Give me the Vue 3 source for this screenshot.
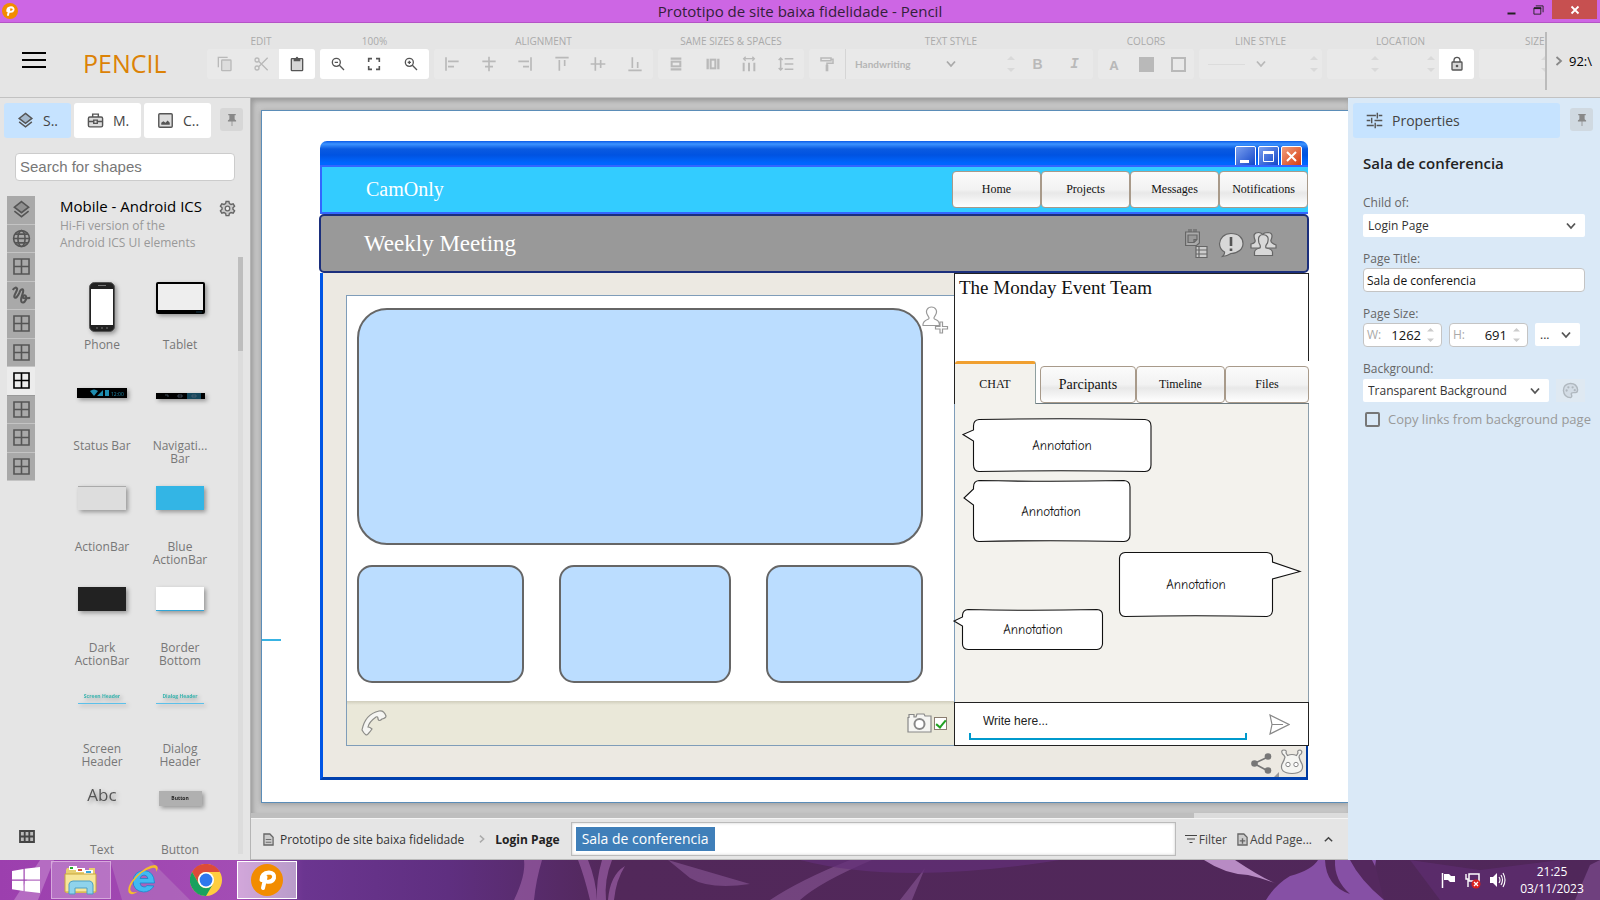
<script setup>
import { ref } from 'vue'

const alignIcons = [
  ['Align left', 'a-left'], ['Align center', 'a-center'], ['Align right', 'a-right'],
  ['Align top', 'a-top'], ['Align middle', 'a-middle'], ['Align bottom', 'a-bottom'],
]
const sizeIcons = [['Same width', 's-width'], ['Same height', 's-height'], ['Space evenly', 's-hspace'], ['Line spacing', 's-vspace']]
const collections = ['layers', 'globe', 'grid', 'squiggle', 'grid', 'grid', 'grid', 'grid', 'grid', 'grid']
const activeCollection = ref(6)
const shapes = [
  { name: ['Phone'], kind: 'phone' }, { name: ['Tablet'], kind: 'tablet' },
  { name: ['Status Bar'], kind: 'status' }, { name: ['Navigati...', 'Bar'], kind: 'nav' },
  { name: ['ActionBar'], kind: 'action' }, { name: ['Blue', 'ActionBar'], kind: 'blue' },
  { name: ['Dark', 'ActionBar'], kind: 'dark' }, { name: ['Border', 'Bottom'], kind: 'border' },
  { name: ['Screen', 'Header'], kind: 'screen' }, { name: ['Dialog', 'Header'], kind: 'dialog' },
  { name: ['Text'], kind: 'text' }, { name: ['Button'], kind: 'button' },
]
const bubbles = [
  { x: 1062, y: 450, d: 'M979 419.5Q1060 418 1145 419.5Q1151 420 1151 426V465Q1151 471 1145 471.5Q1060 470 979 471.5Q973.500 471 973.500 465V441L963 434.500L973.500 430V426Q973.500 420 979 419.500Z' },
  { x: 1051, y: 516, d: 'M979 480.5Q1050 482 1124 480.5Q1130 481 1130 487V535Q1130 541 1124 541.5Q1050 540 979 541.5Q973.500 541 973.500 535V505L964 498L973.500 489V487Q973.500 481 979 480.500Z' },
  { x: 1196, y: 589, d: 'M1125 552.500H1267Q1272.500 553 1272.500 558V562L1300 571.500L1272.500 579V611Q1272 616 1267 616.500Q1195 615 1125 616.500Q1119.500 616 1119.500 610V558Q1120 553 1125 552.500Z' },
  { x: 1033, y: 634, d: 'M968 609.500Q1030 611 1097 609.500Q1102.500 610 1102.500 615V644Q1102 649 1097 649.500H968Q962.500 649 962.500 644V626L954 621L962.500 617V615Q963 610 968 609.500Z' },
]
const search = ref('')
const pageTitle = ref('Sala de conferencia')
const pageW = ref('1262')
const pageH = ref('691')
const message = ref('Write here...')
const camera = ref(true)
</script>

<template>
  <div class="app">
    <svg class="sprite" aria-hidden="true">
      <symbol id="pencil-logo" viewBox="0 0 32 32"><circle cx="16" cy="16" r="16" fill="#f28c00" /><path d="M12 24L14.500 13Q11.500 14 10.500 16Q10.500 9 18 8.500Q24 9 23 14Q21.500 18.500 15.500 17.500" fill="none" stroke="#fff" stroke-width="4" stroke-linecap="round" stroke-linejoin="round" /></symbol>
      <symbol id="copy" viewBox="0 0 24 24"><path d="M2 17V2H16" fill="none" stroke="currentColor" stroke-width="2" /><rect x="7" y="6" width="14" height="16" rx="1" fill="#ddd" stroke="currentColor" stroke-width="2" /></symbol>
      <symbol id="cut" viewBox="0 0 24 24"><g fill="none" stroke="currentColor" stroke-width="2"><circle cx="6" cy="6" r="3" /><circle cx="6" cy="18" r="3" /><path d="M8.500 8L22 21.500M8.500 16L22 2.500" /></g></symbol>
      <symbol id="paste" viewBox="0 0 24 24"><rect x="3.500" y="4" width="17" height="18" rx="1" fill="#d6d6d6" stroke="currentColor" stroke-width="2" /><path d="M7 3H10Q12 -1 14 3H17V8H7Z" fill="currentColor" /></symbol>
      <symbol id="zoom-out" viewBox="0 0 24 24"><g fill="none" stroke="currentColor" stroke-width="2"><circle cx="9.500" cy="9.500" r="6" /><path d="M14 14L21 21M7 9.500H12" /></g></symbol>
      <symbol id="zoom-in" viewBox="0 0 24 24"><g fill="none" stroke="currentColor" stroke-width="2"><circle cx="9.500" cy="9.500" r="6" /><path d="M14 14L21 21M7 9.500H12M9.500 7V12" /></g></symbol>
      <symbol id="fit" viewBox="0 0 24 24"><path d="M4 9V4H9M15 4H20V9M20 15V20H15M9 20H4V15" fill="none" stroke="currentColor" stroke-width="2.400" /></symbol>
      <symbol id="a-left" viewBox="0 0 24 24"><path d="M3 2V22M6 8H22M6 16H15" stroke="currentColor" stroke-width="2.500" /></symbol>
      <symbol id="a-center" viewBox="0 0 24 24"><path d="M12 1V23M2 8H22M6 16H18" stroke="currentColor" stroke-width="2.500" /></symbol>
      <symbol id="a-right" viewBox="0 0 24 24"><path d="M21 2V22M2 8H18M9 16H18" stroke="currentColor" stroke-width="2.500" /></symbol>
      <symbol id="a-top" viewBox="0 0 24 24"><path d="M2 2.500H22M8 6V22M16 6V15" stroke="currentColor" stroke-width="2.500" /></symbol>
      <symbol id="a-middle" viewBox="0 0 24 24"><path d="M1 12H23M8 2V22M16 6V18" stroke="currentColor" stroke-width="2.500" /></symbol>
      <symbol id="a-bottom" viewBox="0 0 24 24"><path d="M2 21.500H22M8 2V18M16 9V18" stroke="currentColor" stroke-width="2.500" /></symbol>
      <symbol id="s-width" viewBox="0 0 24 24"><path d="M4 4H20M4 20H20" stroke="currentColor" stroke-width="3.500" /><rect x="5.500" y="8.500" width="13" height="7" fill="none" stroke="currentColor" stroke-width="3" /></symbol>
      <symbol id="s-height" viewBox="0 0 24 24"><path d="M4 4V20M20 4V20" stroke="currentColor" stroke-width="3.500" /><rect x="8.500" y="5.500" width="7" height="13" fill="none" stroke="currentColor" stroke-width="3" /></symbol>
      <symbol id="s-hspace" viewBox="0 0 24 24"><path d="M4 10V23M12 10V23M20 10V23" stroke="currentColor" stroke-width="3" /><path d="M4 4H20M7 1L4 4L7 7M17 1L20 4L17 7" fill="none" stroke="currentColor" stroke-width="2" /></symbol>
      <symbol id="s-vspace" viewBox="0 0 24 24"><path d="M10 4H23M10 12H23M10 20H23M4 3V21M1 6L4 3L7 6M1 18L4 21L7 18" fill="none" stroke="currentColor" stroke-width="2.300" /></symbol>
      <symbol id="painter" viewBox="0 0 24 24"><path d="M3 3H18V7H3ZM18 5H21V11H12V14" fill="none" stroke="currentColor" stroke-width="2.300" /><path d="M10 13H14V23H10Z" fill="currentColor" /></symbol>
      <symbol id="lock" viewBox="0 0 24 24"><path d="M7.500 9V6Q8 2 12 2Q16 2 16.500 6V9" fill="none" stroke="currentColor" stroke-width="2" /><rect x="4.500" y="9" width="15" height="12" rx="1" fill="#d6d6d6" stroke="currentColor" stroke-width="2" /><circle cx="12" cy="15" r="2" fill="currentColor" /></symbol>
      <symbol id="chev-down" viewBox="0 0 12 12"><path d="M2 3.500L6 8L10 3.500" fill="none" stroke="currentColor" stroke-width="1.800" /></symbol>
      <symbol id="chev-right" viewBox="0 0 12 12"><path d="M3.500 2L8 6L3.500 10" fill="none" stroke="currentColor" stroke-width="1.800" /></symbol>
      <symbol id="chev-up" viewBox="0 0 12 12"><path d="M2 8L6 4L10 8" fill="none" stroke="currentColor" stroke-width="1.600" /></symbol>
      <symbol id="spin" viewBox="0 0 8 18"><path d="M0 5L4 1L8 5ZM0 13H8L4 17Z" fill="currentColor" /></symbol>
      <symbol id="layers" viewBox="0 0 24 24"><path d="M12 2L21 9L12 16L3 9Z" fill="currentColor" fill-opacity=".3" /><path d="M12 2L21 9L12 16L3 9ZM3 14L12 21L21 14" fill="none" stroke="currentColor" stroke-width="2" /></symbol>
      <symbol id="case" viewBox="0 0 24 24"><rect x="2" y="7" width="20" height="14" rx="2" fill="#ddd" stroke="currentColor" stroke-width="2" /><path d="M8 7V3H16V7M2 13.500H9M15 13.500H22M9.500 11.500H14.500V16H9.500Z" fill="none" stroke="currentColor" stroke-width="2" /></symbol>
      <symbol id="image" viewBox="0 0 24 24"><rect x="2.500" y="2.500" width="19" height="19" rx="1.500" fill="#ddd" stroke="currentColor" stroke-width="2" /><path d="M6 18V15L9 13L12 15L15 12L18 15V18Z" fill="currentColor" /></symbol>
      <symbol id="pin" viewBox="0 0 16 18"><path d="M3 1H13V2.500H11.500V8L13.500 9.500V11H2.500V9.500L4.500 8V2.500H3ZM7.500 11H8.500V17H7.500Z" fill="currentColor" /></symbol>
      <symbol id="globe" viewBox="0 0 24 24"><g fill="none" stroke="currentColor" stroke-width="2"><circle cx="12" cy="12" r="10" /><ellipse cx="12" cy="12" rx="4.500" ry="10" /><path d="M2 12H22M4 6.500H20M4 17.500H20" /></g></symbol>
      <symbol id="grid" viewBox="0 0 24 24"><path d="M2.500 2.500H21.500V21.500H2.500ZM12 2.500V21.500M2.500 12H21.500" fill="none" stroke="currentColor" stroke-width="2" /></symbol>
      <symbol id="squiggle" viewBox="0 0 24 24"><path d="M1 5C3 2 6 1 6.500 3.500C7 6 2 11 3 14C4.500 17 8 12 9.500 8C10.500 5 13 3 14 5C15.500 8 9.500 16 12 20C14.500 23 18.500 18 18 14C17.500 10 12.500 12 14 15C15.500 16.500 19 15 23 15" fill="none" stroke="currentColor" stroke-width="2.600" /></symbol>
      <symbol id="gear" viewBox="0 0 24 24"><path d="M10 2H14L14.700 5L17 6.300L20 5.400L22 8.800L19.700 11V13L22 15.200L20 18.600L17 17.700L14.700 19L14 22H10L9.300 19L7 17.700L4 18.600L2 15.200L4.300 13V11L2 8.800L4 5.400L7 6.300L9.300 5Z" fill="#ccc" stroke="currentColor" stroke-width="2" /><circle cx="12" cy="12" r="3.200" fill="#eee" stroke="currentColor" stroke-width="1.800" /></symbol>
      <symbol id="table" viewBox="0 0 16 13"><path d="M1 1H15V12H1ZM5.700 1V12M10.300 1V12M1 6.500H15" fill="#bbb" stroke="currentColor" stroke-width="1.800" /></symbol>
      <symbol id="sliders" viewBox="0 0 24 24"><path d="M1 5H14M18 5H23M16 1V9M1 12H6M12 12H23M8 8V16M1 19H11M15 19H23M13 15V23" stroke="currentColor" stroke-width="2" /></symbol>
      <symbol id="palette" viewBox="0 0 24 24"><path d="M12 2Q2 3 2 12Q3 22 12 22Q15 21 13 17Q13 15 16 15H19Q22 15 22 11Q21 2 12 2Z" fill="currentColor" fill-opacity=".25" stroke="currentColor" stroke-width="2" /><g fill="currentColor"><circle cx="6.500" cy="12" r="1.600" /><circle cx="9" cy="7.500" r="1.600" /><circle cx="15" cy="7.500" r="1.600" /><circle cx="18" cy="11.500" r="1.600" /></g></symbol>
      <symbol id="doc" viewBox="0 0 12 14"><path d="M1 1H7.500L11 4.500V13H1Z" fill="#ccc" stroke="currentColor" stroke-width="1.400" /><path d="M3 7H9M3 10H9" stroke="currentColor" /></symbol>
      <symbol id="doc-add" viewBox="0 0 12 14"><path d="M1 1H7.500L11 4.500V13H1Z" fill="#ccc" stroke="currentColor" stroke-width="1.400" /><path d="M6 5.500V11.500M3 8.500H9" stroke="currentColor" stroke-width="1.500" /></symbol>
      <symbol id="filter" viewBox="0 0 12 12"><path d="M0 2.500H12M2 6H10M4.500 9.500H7.500" stroke="currentColor" stroke-width="1.200" /></symbol>
    </svg>

    <header class="titlebar">
      <svg class="app-icon"><use href="#pencil-logo" /></svg>
      <h1>Prototipo de site baixa fidelidade - Pencil</h1>
      <div class="win-buttons">
        <button aria-label="Minimize"><svg viewBox="0 0 10 12"><path d="M1 9.500H9" stroke="#222" stroke-width="2" /></svg></button>
        <button aria-label="Restore"><svg viewBox="0 0 12 12"><path d="M1 4H8.500V10.500H1ZM3 1.500H11V8.500" fill="none" stroke="#222" /><path d="M1 4H9" stroke="#222" stroke-width="2" /></svg></button>
        <button class="close" aria-label="Close"><svg viewBox="0 0 10 10"><path d="M1.500 1.500L8.500 8.500M8.500 1.500L1.500 8.500" stroke="#fff" stroke-width="1.800" /></svg></button>
      </div>
    </header>

    <div class="toolbar">
      <button class="menu" aria-label="Menu"><i></i><i></i><i></i></button>
      <div class="brand">PENCIL</div>
      <div class="groups">
        <div class="group g-edit"><span>EDIT</span><div class="cells">
          <button aria-label="Copy" disabled><svg><use href="#copy" /></svg></button>
          <button aria-label="Cut" disabled><svg><use href="#cut" /></svg></button>
          <button aria-label="Paste" class="on"><svg><use href="#paste" /></svg></button>
        </div></div>
        <div class="group g-zoom"><span>100%</span><div class="cells">
          <button aria-label="Zoom out" class="on"><svg><use href="#zoom-out" /></svg></button>
          <button aria-label="Fit" class="on"><svg><use href="#fit" /></svg></button>
          <button aria-label="Zoom in" class="on"><svg><use href="#zoom-in" /></svg></button>
        </div></div>
        <div class="group g-align"><span>ALIGNMENT</span><div class="cells">
          <button v-for="[label, id] in alignIcons" :key="id" :aria-label="label" disabled><svg><use :href="'#' + id" /></svg></button>
        </div></div>
        <div class="group g-size"><span>SAME SIZES &amp; SPACES</span><div class="cells">
          <button v-for="[label, id] in sizeIcons" :key="id" :aria-label="label" disabled><svg><use :href="'#' + id" /></svg></button>
        </div></div>
        <div class="group g-text"><span>TEXT STYLE</span><div class="cells">
          <button class="painter" aria-label="Format painter" disabled><svg><use href="#painter" /></svg></button>
          <div class="pick font-pick"><select aria-label="Font" disabled><option>Handwriting</option></select><svg><use href="#chev-down" /></svg></div>
          <div class="step"><input aria-label="Font size" disabled><svg><use href="#spin" /></svg></div>
          <button class="bold" disabled>B</button>
          <button class="italic" disabled>I</button>
        </div></div>
        <div class="group g-colors"><span>COLORS</span><div class="cells">
          <button class="letter" disabled>A</button>
          <button aria-label="Fill color" disabled><i class="swatch solid"></i></button>
          <button aria-label="Stroke color" disabled><i class="swatch"></i></button>
        </div></div>
        <div class="group g-line"><span>LINE STYLE</span><div class="cells">
          <div class="line-pick"><i></i><svg><use href="#chev-down" /></svg></div>
          <div class="step"><input aria-label="Line width" disabled><svg><use href="#spin" /></svg></div>
        </div></div>
        <div class="group g-loc"><span>LOCATION</span><div class="cells">
          <div class="step"><input aria-label="X" disabled><svg><use href="#spin" /></svg></div>
          <div class="step"><input aria-label="Y" disabled><svg><use href="#spin" /></svg></div>
          <button aria-label="Lock" class="on lock"><svg><use href="#lock" /></svg></button>
        </div></div>
        <div class="group g-dim"><span>SIZE</span><div class="cells">
          <div class="step"><input aria-label="Width" disabled><svg><use href="#spin" /></svg></div>
          <div class="step"><input aria-label="Height" disabled><svg><use href="#spin" /></svg></div>
        </div></div>
      </div>
      <div class="more"><svg><use href="#chev-right" /></svg><span>92:\</span></div>
    </div>

    <main class="work">
      <aside class="left">
        <div class="tabs">
          <button class="tab active"><svg><use href="#layers" /></svg>S..</button>
          <button class="tab"><svg><use href="#case" /></svg>M.</button>
          <button class="tab"><svg><use href="#image" /></svg>C..</button>
          <button class="pin" aria-label="Pin"><svg><use href="#pin" /></svg></button>
        </div>
        <input v-model="search" class="search" placeholder="Search for shapes" aria-label="Search for shapes">
        <div class="library">
          <div class="strip-col">
            <nav class="strip">
              <button v-for="(c, i) in collections" :key="i" :class="{ active: i === activeCollection }" :aria-label="'Collection ' + (i + 1)" @click="activeCollection = i"><svg><use :href="'#' + c" /></svg></button>
            </nav>
            <button class="manage" aria-label="Manage collections"><svg><use href="#table" /></svg></button>
          </div>
          <section class="collection">
            <div class="coll-head">
              <div><h2>Mobile - Android ICS</h2><p>Hi-Fi version of the<br>Android ICS UI elements</p></div>
              <button aria-label="Collection settings"><svg><use href="#gear" /></svg></button>
            </div>
            <div class="scroller">
              <div class="shapes">
                <figure v-for="s in shapes" :key="s.kind">
                  <div class="thumb">
                    <svg v-if="s.kind === 'phone'" width="26" height="50" viewBox="0 0 26 50"><rect x=".5" y=".5" width="25" height="49" rx="5" fill="#222" stroke="#555" /><path d="M2 7H24V43H2Z" fill="#fff" /><path d="M9 3.500H17M7 46H9M12 46H14M17 46H19" stroke="#777" /></svg>
                    <svg v-else-if="s.kind === 'tablet'" width="49" height="32" viewBox="0 0 49 32"><rect width="49" height="32" rx="2" fill="#000" /><rect x="2" y="2" width="45" height="26" fill="#eee" /><path d="M40 30H46" stroke="#134" /></svg>
                    <svg v-else-if="s.kind === 'status'" class="low" width="50" height="10" viewBox="0 0 50 10"><rect width="50" height="10" fill="#000" /><path d="M13 3Q17 0 21 3L17 8ZM20 8L26 2V8ZM28 2H32V8H28Z" fill="#1e8db0" /><text x="34" y="8" font-size="5" fill="#1e8db0">12:00</text></svg>
                    <svg v-else-if="s.kind === 'nav'" class="lower" width="49" height="6" viewBox="0 0 49 6"><rect width="49" height="6" fill="#000" /><rect x="31" width="14" height="6" fill="#15475c" /><path d="M9 2H12V4M22 2H26V4H22ZM36 2H40V4H36Z" fill="none" stroke="#567" stroke-width=".7" /></svg>
                    <i v-else-if="['action', 'blue', 'dark', 'border'].includes(s.kind)" :class="['bar', s.kind]"></i>
                    <span v-else-if="s.kind === 'screen'" class="mini-head">Screen Header</span>
                    <span v-else-if="s.kind === 'dialog'" class="mini-head">Dialog Header</span>
                    <span v-else-if="s.kind === 'text'" class="abc">Abc</span>
                    <span v-else class="mini-button">Button</span>
                  </div>
                  <figcaption><template v-for="(l, i) in s.name" :key="l"><br v-if="i">{{ l }}</template></figcaption>
                </figure>
              </div>
              <div class="track"><i></i></div>
            </div>
          </section>
        </div>
      </aside>

      <section class="center">
        <div class="canvas">
          <div class="page">
            <i class="stray"></i>
            <div class="mock">
              <div class="xp-title">
                <svg viewBox="0 0 21 19"><path d="M.5 19V2Q.500.500 2 .500H19Q20.500.500 20.500 2V19" fill="url(#xb)" stroke="#fff" /><path d="M5 15.500H14" stroke="#fff" stroke-width="3" /></svg>
                <svg viewBox="0 0 21 19"><path d="M.5 19V2Q.500.500 2 .500H19Q20.500.500 20.500 2V19" fill="url(#xb)" stroke="#fff" /><path d="M5.500 6V15.500H15.500V6" fill="none" stroke="#fff" /><path d="M5 6.500H16" stroke="#fff" stroke-width="3" /></svg>
                <svg viewBox="0 0 21 19"><path d="M.5 19V2Q.500.500 2 .500H19Q20.500.500 20.500 2V19" fill="url(#xr)" stroke="#fff" /><path d="M6 6L15 15M15 6L6 15" stroke="#fff" stroke-width="2" /></svg>
                <svg class="sprite"><linearGradient id="xb" x2="1" y2="1"><stop stop-color="#7da2f0" /><stop offset="1" stop-color="#1145c8" /></linearGradient><linearGradient id="xr" x2="1" y2="1"><stop stop-color="#f0a080" /><stop offset="1" stop-color="#d83c10" /></linearGradient></svg>
              </div>
              <div class="site-head">
                <strong>CamOnly</strong>
                <nav><button>Home</button><button>Projects</button><button>Messages</button><button>Notifications</button></nav>
              </div>
              <div class="meeting">
                <h2>Weekly Meeting</h2>
                <svg width="92" height="30" viewBox="1185 229 92 30" fill="#bbb" stroke="#666" stroke-width="1.200">
                  <path d="M1185.600 232H1199.400V243L1196.500 245.500H1185.600Z" fill="#aaa" /><path d="M1188 235H1197V239.500L1194 242.500H1188ZM1194 242.500V239.500H1197" fill="#999" /><path d="M1189 229V232M1191 229V232M1194 229V232M1196 229V232" />
                  <path d="M1196 246.500H1207V257.500H1196Z" fill="#ccc" /><path d="M1199 246V258M1196 250H1207M1196 254H1207" fill="none" />
                  <path d="M1231 233.500C1239 233.500 1243 238 1243 243.500C1243 249 1238 253.500 1231 253.500Q1227 256 1222.500 256.500Q1225 254 1224.500 252C1221 250 1219.500 247 1219.500 243.500C1220 238 1224 233.500 1231 233.500Z" fill="#d8d8d8" />
                  <path d="M1231 237V246M1231 248.500V251" fill="none" stroke="#555" stroke-width="2.600" />
                  <path d="M1251 248V244Q1256 243 1255 240Q1252 232.500 1258.500 232.500Q1261 232.500 1262.500 234.500Q1264 232.500 1268 232.500Q1274 233 1271 240Q1270 243 1276 245V248Z" fill="#d8d8d8" />
                  <path d="M1254.500 255.500V252Q1255 249 1260 248Q1261 246 1259 243Q1257 235 1263 234.500Q1270 235 1267.500 243Q1265 246 1266 248Q1272 249 1272.500 252V255.500Z" fill="#d8d8d8" />
                </svg>
              </div>
              <div class="mock-body">
                <div class="stage">
                  <div class="stage-panel">
                    <div class="videos">
                      <div class="video big"></div>
                      <div class="row"><div class="video"></div><div class="video"></div><div class="video"></div></div>
                      <svg class="add-user" width="28" height="28" viewBox="0 0 28 28" fill="#fff" stroke="#999" stroke-width="1.200"><path d="M1 19.500C0.500 15 4 14 6.500 13C8 12 6.500 11 5.500 9C3 5 5.500 1 9.500 1C13.500 1 16 5 13.500 9C12.500 11 11 12 12.500 13C15 14 17.500 15 17.500 19.500Z" /><path d="M18 16H20.500V20.500H25.500V23H20.500V27H18V23H13.500V20.500H18Z" /></svg>
                    </div>
                    <div class="call-bar">
                      <svg width="26" height="27" viewBox="0 0 26 27"><path d="M1 20C3 10 9 3 18 1Q23 0 25 6Q25 8 21 9Q18 12 17 9Q17 6 15 7Q8 12 7 17Q9 17 11 19Q9 22 7 24Q5 27 1 20Z" fill="#f5f5f2" stroke="#8c8c88" stroke-width="1.200" /></svg>
                      <span></span>
                      <svg width="25" height="20" viewBox="0 0 25 20"><path d="M1 4.500H2V1.500H7V4H9L10 1H17L18 3H24V19H1Z" fill="#f5f5f2" stroke="#888" stroke-width="1.200" /><circle cx="12.500" cy="11" r="5" fill="#fff" stroke="#888" stroke-width="2" /></svg>
                      <input v-model="camera" type="checkbox" class="check" aria-label="Camera on">
                    </div>
                  </div>
                </div>
                <div class="side">
                  <div class="team"><h3>The Monday Event Team</h3></div>
                  <div class="chat-tabs"><button class="cur">CHAT</button><div class="rest"><button class="wide">Parcipants</button><button>Timeline</button><button class="last">Files</button></div></div>
                  <div class="chat">
                    <svg viewBox="955 404 353 298">
                      <g v-for="b in bubbles" :key="b.d"><path :d="b.d" fill="#fff" stroke="#111" stroke-width="1.100" /><text :x="b.x" :y="b.y" text-anchor="middle">Annotation</text></g>
                    </svg>
                  </div>
                  <div class="write">
                    <input v-model="message" aria-label="Message">
                    <button aria-label="Send"><svg width="21" height="21" viewBox="0 0 21 21"><path d="M1 1L20 10.500L1 20L3 10.500ZM3 10.500H14" fill="#fff" stroke="#888" stroke-width="1.200" /></svg></button>
                  </div>
                </div>
              </div>
              <div class="mock-foot">
                <svg width="54" height="31" viewBox="1250 746 54 31">
                  <path d="M1268 757L1254 763.500L1268 771" fill="none" stroke="#777" stroke-width="1.600" /><g fill="#777"><circle cx="1268" cy="756.500" r="3.300" /><circle cx="1254.500" cy="763.500" r="3.300" /><circle cx="1268" cy="770.500" r="3.300" /></g>
                  <path d="M1279 772V779H1272Z" fill="#999" />
                  <path d="M1285 757Q1284 755 1282.500 754Q1280.500 750 1284 750Q1287 750 1286 753L1287.500 755.500Q1292 753.500 1296.500 755.500L1298 753Q1297 750 1300 750Q1303 751 1301 754Q1299 755 1299 757Q1300 761 1302 764Q1305 773 1292 773.500Q1279 773 1282 764Q1284 761 1285 757Z" fill="#f5f5f2" stroke="#888" stroke-width="1.200" /><circle cx="1288" cy="764.500" r="2.200" fill="#fff" stroke="#888" /><circle cx="1296" cy="764.500" r="2.200" fill="#fff" stroke="#888" />
                </svg>
              </div>
            </div>
          </div>
        </div>
        <div class="hscroll"><i></i></div>
        <footer class="pages">
          <a href="#" class="crumb"><svg class="d"><use href="#doc" /></svg>Prototipo de site baixa fidelidade</a>
          <svg class="sep"><use href="#chev-right" /></svg>
          <a href="#" class="crumb strong">Login Page</a>
          <div class="page-list"><button>Sala de conferencia</button></div>
          <button class="act"><svg class="f"><use href="#filter" /></svg>Filter</button>
          <button class="act"><svg class="d"><use href="#doc-add" /></svg>Add Page...</button>
          <button class="act up" aria-label="Expand"><svg class="c"><use href="#chev-up" /></svg></button>
        </footer>
      </section>

      <aside class="right">
        <div class="tabs">
          <button class="tab active"><svg><use href="#sliders" /></svg>Properties</button>
          <button class="pin" aria-label="Pin"><svg><use href="#pin" /></svg></button>
        </div>
        <form class="props" @submit.prevent>
          <h2>Sala de conferencia</h2>
          <label for="child">Child of:</label>
          <div class="pick"><select id="child"><option>Login Page</option></select><svg><use href="#chev-down" /></svg></div>
          <label for="ptitle">Page Title:</label>
          <input id="ptitle" v-model="pageTitle" class="field">
          <label for="pw">Page Size:</label>
          <div class="sizes">
            <div class="num"><label for="pw">W:</label><input id="pw" v-model="pageW"><svg><use href="#spin" /></svg></div>
            <div class="num"><label for="ph">H:</label><input id="ph" v-model="pageH"><svg><use href="#spin" /></svg></div>
            <div class="pick dots"><select aria-label="Size presets"><option>...</option></select><svg><use href="#chev-down" /></svg></div>
          </div>
          <label for="bg">Background:</label>
          <div class="bgrow">
            <div class="pick"><select id="bg"><option>Transparent Background</option></select><svg><use href="#chev-down" /></svg></div>
            <button class="palette" aria-label="Pick color" disabled><svg><use href="#palette" /></svg></button>
          </div>
          <div class="copy"><input id="copylinks" type="checkbox"><label for="copylinks">Copy links from background page</label></div>
        </form>
      </aside>
    </main>

    <div class="taskbar">
      <svg class="wall" viewBox="0 0 1600 40" preserveAspectRatio="none">
        <defs><linearGradient id="w"><stop stop-color="#9c3fae" /><stop offset=".15" stop-color="#a34db4" /><stop offset=".19" stop-color="#6b3590" /><stop offset=".28" stop-color="#5f2f80" /><stop offset=".38" stop-color="#52285a" /><stop offset="1" stop-color="#50275a" /></linearGradient></defs>
        <rect width="1600" height="40" fill="url(#w)" />
        <path d="M14 40L40 0H54L38 40Z" fill="#c489cf" opacity=".6" /><path d="M110 0L122 40H190L150 0Z" fill="#b77cc2" opacity=".5" />
        <path d="M514 40Q526 15 524 0H542Q536 20 534 40ZM590 40Q584 15 578 0H588Q596 20 597 40ZM597 40Q596 20 602 0H612Q604 20 606 40ZM608 40Q610 15 625 6Q616 20 614 40Z" fill="#94599f" opacity=".75" />
        <path d="M668 0L750 24Q710 30 690 18ZM770 40Q800 20 850 0H872Q820 22 800 40ZM900 40L925 8L912 40Z" fill="#9c66ab" opacity=".45" />
        <path d="M800 0H990L1060 0Q900 26 800 0Z" fill="#632f78" opacity=".7" />
        <path d="M1204 0Q1225 14 1248 15Q1262 18 1277 24Q1262 18 1235 0Z" fill="#b88bc4" />
        <path d="M1266 40Q1275 25 1290 16Q1312 10 1318 0H1376Q1372 20 1384 40Z" fill="#8650a5" /><path d="M1325 0H1335Q1334 20 1350 34Q1326 26 1325 0ZM1350 0Q1360 20 1384 40L1376 8L1372 0Z" fill="#54285e" />
        <path d="M1410 0L1480 10L1560 0V40H1440Z" fill="#63307a" opacity=".5" /><path d="M1575 40L1590 5L1600 0V40Z" fill="#8d5aa2" opacity=".5" />
      </svg>
      <button class="task start" aria-label="Start"><svg width="28" height="26" viewBox="0 0 28 26"><path d="M0 4L11.500 2V12.500H0ZM12.700 1.800L28 0V12.500H12.700ZM0 13.700H11.500V24L0 22.300ZM12.700 13.700H28V26L12.700 24.200Z" fill="#fff" /></svg></button>
      <button class="task open" aria-label="File Explorer"><svg width="34" height="30" viewBox="0 0 34 30"><path d="M3 3H12V6H25V3H31V28H2V5Z" fill="#e8cf70" /><path d="M5 1H13V5H5Z" fill="#fff" /><path d="M6 2H9V4H6Z" fill="#23a829" /><path d="M12 3H21V7H12Z" fill="#fff" /><path d="M14 4H18V6H14Z" fill="#d4553a" /><path d="M20 5H29V9H20Z" fill="#fff" /><path d="M22 6H27V8H22Z" fill="#38a5da" /><path d="M1 9H32V27H1Z" fill="#f7e69a" stroke="#c9a63d" /><path d="M5 29V19Q6 16 9 16H26Q29 17 29 20V29H23V23H11V29Z" fill="#8fd3ec" stroke="#4e9fc4" /></svg></button>
      <button class="task" aria-label="Internet Explorer"><svg width="32" height="32" viewBox="0 0 32 32"><path d="M27 22Q23 28 16.500 28Q6 27 6 17Q7 7 17 6.500Q27 7 27.500 19H13Q13.500 23 17 23Q19 23 20 21.500ZM13 14.500H21Q20 11 17 11Q14 11 13 14.500Z" fill="#41b9f2" stroke="#1b86cc" stroke-width=".8" fill-rule="evenodd" /><path d="M2 29Q-1 23 8 13Q20 1 28 1Q33 2 29 8Q30 3 25 4Q15 6 6 18Q1 26 5 28Q9 29 12 27Q5 32 2 29Z" fill="#f5bd2c" /></svg></button>
      <button class="task chrome" aria-label="Chrome"><svg width="32" height="32" viewBox="0 0 32 32"><circle cx="16" cy="16" r="16" fill="#ffcd40" /><path d="M2.100 8A16 16 0 0 1 29.900 8H16A8 8 0 0 0 9 20Z" fill="#dd4b39" /><path d="M2.100 8A16 16 0 0 0 16 32L23 20A8 8 0 0 1 9 20Z" fill="#1aa15f" /><circle cx="16" cy="16" r="8" fill="#fff" /><circle cx="16" cy="16" r="6.400" fill="#2f78ee" /></svg></button>
      <button class="task open cur" aria-label="Pencil"><svg width="32" height="32"><use href="#pencil-logo" /></svg></button>
      <div class="tray">
        <svg width="66" height="18" viewBox="0 0 66 18">
          <path d="M2.500 2V17" stroke="#fff" stroke-width="1.500" /><path d="M4 3H9L11 5H15V11H10L8 9H4Z" fill="#fff" />
          <path d="M29 3H39V10H29ZM32 13H37M34 10V13" fill="none" stroke="#fff" stroke-width="1.500" /><path d="M26 3V8H28V16" fill="none" stroke="#fff" stroke-width="1.400" /><circle cx="36" cy="13" r="4.500" fill="#d8201c" /><path d="M34 11L38 15M38 11L34 15" stroke="#fff" stroke-width="1.300" />
          <path d="M50 6H53L57 2V16L53 12H50Z" fill="#fff" /><path d="M59 6Q61 9 59 12M61 4Q64 9 61 14M63 2Q67 9 63 16" fill="none" stroke="#fff" stroke-width="1.100" />
        </svg>
      </div>
      <time>21:25<br>03/11/2023</time>
    </div>
  </div>
</template>

<style>
html, body { height: 100%; margin: 0; overflow: hidden; }
</style>

<style scoped>
.app { height: 100vh; display: flex; flex-direction: column; font-family: "Open Sans", "Noto Sans", sans-serif; font-size: 12px; color: #333; background: #e5e5e5; overflow: hidden; }
.app * { box-sizing: border-box; }
button, input, select { font: inherit; color: inherit; border: 0; padding: 0; margin: 0; background: none; outline: 0; }
h1, h2, h3, p, figure { margin: 0; font-weight: 400; }
svg { display: block; flex: none; }
a { color: inherit; text-decoration: none; }
.sprite { position: absolute; width: 0; height: 0; }

.titlebar { height: 23px; background: #cd66e4; border-bottom: 1px solid #b453c6; position: relative; flex: none; display: flex; justify-content: center; }
.app-icon { position: absolute; left: 2px; top: 3px; width: 16px; height: 16px; }
.titlebar h1 { font-size: 15px; line-height: 23px; color: #33203a; }
.win-buttons { position: absolute; right: 3px; top: 0; height: 19px; display: flex; }
.win-buttons button { width: 27px; display: grid; place-items: center; }
.win-buttons svg { width: 11px; height: 12px; }
.win-buttons .close { width: 45px; background: #c75050; }
.win-buttons .close svg { width: 10px; height: 10px; }

.toolbar { height: 75px; flex: none; display: flex; align-items: flex-start; border-bottom: 1px solid #c2c2c2; }
.menu { width: 24px; margin: 29px 0 0 22px; display: grid; gap: 5px; }
.menu i { height: 2px; background: #000; }
.brand { width: 124px; margin: 21px 0 0 37px; font-size: 25px; line-height: 38px; color: #dc8206; }
.groups { flex: 1; min-width: 0; display: flex; gap: 5px; overflow: hidden; margin-top: 9px; height: 58px; border-right: 2px solid #bbb; }
.group { flex: none; display: flex; flex-direction: column; text-align: center; }
.group > span { font-size: 10px; line-height: 14px; padding: 2px 0 1px; color: #aaa; white-space: nowrap; }
.cells { display: flex; height: 30px; background: #e9e9e9; border-radius: 3px; overflow: hidden; color: #b9b9b9; }
.cells button { flex: 1; display: grid; place-items: center; }
.cells button svg { width: 16px; height: 16px; }
.cells .on { background: #fff; color: #555; }
.g-edit { width: 108px; } .g-zoom { width: 109px; } .g-align { width: 219px; } .g-size { width: 146px; }
.g-text { width: 284px; } .g-colors { width: 96px; } .g-line { width: 123px; } .g-loc { width: 147px; } .g-dim { width: 147px; }
.g-dim > span { text-align: left; margin-left: 46px; }
.cells .painter { flex: none; width: 37px; border-right: 1px solid #d5d5d5; }
.cells .bold, .cells .italic { flex: none; width: 37px; font: bold 14px "Liberation Sans", sans-serif; }
.cells .italic { font: italic bold 14px "Liberation Mono", monospace; }
.cells .letter { font: bold 13px "Open Sans", sans-serif; padding-top: 1px; }
.cells .lock { flex: none; width: 35px; }
.swatch { width: 15px; height: 15px; border: 2px solid #b9b9b9; display: block; }
.swatch.solid { background: #b9b9b9; }
.font-pick { width: 110px; }
.cells .font-pick select { background: none; padding-left: 9px; font-family: "Comic Sans MS", Lato, sans-serif; font-weight: 700; font-size: 10px; color: #b5b5b5; opacity: 1; height: 30px; }
.step { flex: 1; min-width: 0; display: flex; align-items: center; padding-right: 4px; }
.step input { flex: 1; width: 0; }
.step svg { width: 8px; height: 18px; color: #d9d9d9; }
.line-pick { width: 68px; display: flex; align-items: center; gap: 10px; padding-left: 9px; }
.line-pick i { flex: 1; height: 1px; background: #dcdcdc; }
.line-pick svg { width: 12px; height: 12px; }
.more { width: 53px; padding: 30px 0 0 6px; display: flex; align-items: center; gap: 4px; color: #000; font-size: 13px; line-height: 16px; }
.more svg { width: 12px; height: 12px; color: #888; }

.work { flex: 1; min-height: 0; display: flex; }
.left { width: 251px; flex: none; display: flex; flex-direction: column; border-right: 1px solid #b5b5b5; background: #e5e5e5; }
.tabs { display: flex; gap: 3px; padding: 5px 7px 0 4px; }
.tab { width: 67px; height: 35px; border-radius: 3px; background: #fff; display: flex; align-items: center; gap: 9px; padding-left: 13px; font-size: 14px; color: #444; }
.tab.active { background: #c6e3ff; }
.tab svg { width: 17px; height: 17px; color: #555; }
.pin { width: 23px; height: 23px; margin: 5px 0 0 auto; background: #d7d7d7; border-radius: 3px; display: grid; place-items: center; color: #888; }
.pin svg { width: 12px; height: 14px; }
.search { height: 28px; margin: 15px 15px 0; border: 1px solid #ccc; border-radius: 4px; background: #fff; padding: 0 4px 1px; font: 15px "Liberation Sans", sans-serif; }
.search::placeholder { color: #777; opacity: 1; }
.library { flex: 1; min-height: 0; display: flex; padding: 15px 7px 6px; }
.strip-col { display: flex; flex-direction: column; justify-content: space-between; padding-bottom: 11px; }
.strip { width: 28px; display: grid; grid-template-rows: repeat(10, 1fr); height: 285px; background: #a9a9a9; }
.strip button { display: grid; place-items: center; border-bottom: 1px solid #c4c4c4; color: #555; }
.strip button.active { background: #ececec; color: #000; border-color: #999; }
.strip svg { width: 19px; height: 19px; }
.manage { margin-left: 12px; width: 16px; color: #444; }
.manage svg { width: 16px; height: 13px; }
.collection { flex: 1; min-width: 0; display: flex; flex-direction: column; }
.coll-head { display: flex; justify-content: space-between; align-items: flex-start; padding: 0 7px 0 25px; height: 61px; }
.coll-head h2 { font-size: 15px; line-height: 21px; color: #000; white-space: nowrap; }
.coll-head p { font-size: 12px; line-height: 17px; color: #999; white-space: nowrap; }
.coll-head button { padding-top: 4px; color: #666; }
.coll-head button svg { width: 17px; height: 17px; }
.scroller { flex: 1; min-height: 0; display: flex; justify-content: space-between; overflow: hidden; padding-left: 28px; }
.shapes { display: grid; grid-template-columns: 78px 78px; grid-auto-rows: 101px; padding-top: 25px; }
.shapes figure { text-align: center; }
.thumb { height: 56px; display: flex; justify-content: center; align-items: flex-start; }
.thumb > * { filter: drop-shadow(2px 2px 2px rgba(0, 0, 0, .35)); }
.thumb .low { margin-top: 5px; } .thumb .lower { margin-top: 10px; }
figcaption { font-size: 12px; line-height: 13px; color: #777; }
.bar { width: 48px; height: 24px; margin-top: 2px; }
.bar.action { background: #ddd; border-top: 1px solid #aaa; }
.bar.blue { background: #33b5e5; } .bar.dark { background: #222; }
.bar.border { background: #fff; border-bottom: 1px solid #33a5d5; }
.mini-head { margin-top: 4px; width: 48px; height: 14px; border-bottom: 1px solid #5bc0ea; font-size: 5px; line-height: 13px; font-weight: 700; color: #3bb5b0; white-space: nowrap; }
.abc { font-size: 17px; line-height: 15px; color: #555; }
.mini-button { margin-top: 4px; width: 43px; height: 15px; background: #b0b0b0; font-size: 5px; line-height: 15px; font-weight: 700; color: #222; }
.track { width: 5px; background: #dcdcdc; }
.track i { display: block; height: 94px; background: #bebebe; }

.center { flex: 1; min-width: 0; display: flex; flex-direction: column; }
.canvas { flex: 1; min-height: 0; padding: 12px 0 10px 10px; background: #c6c6c6; box-shadow: inset 2px 3px 5px #999; overflow: hidden; }
.page { position: relative; height: 100%; border: 1px solid #5b8db8; border-right: 0; background: #fff; padding: 30px 40px 22px 58px; box-shadow: 0 1px 5px #999; }
.stray { position: absolute; left: 0; bottom: 161px; width: 19px; height: 2px; background: #38b3e3; }
.mock { height: 100%; display: flex; flex-direction: column; font-family: "Liberation Serif", serif; color: #111; }
.xp-title { height: 24px; flex: none; border-radius: 7px 7px 0 0; background: linear-gradient(#0a5be8, #3c93ff 3px, #0a5ae0 8px, #0053e1 14px, #0066ff 22px); display: flex; justify-content: flex-end; gap: 2px; padding: 5px 6px 0 0; }
.xp-title svg { width: 21px; height: 19px; }
.xp-title .sprite { width: 0; height: 0; }
.site-head { height: 49px; flex: none; background: #33ccff; border: 2px solid #3366ff; border-right: 0; display: flex; justify-content: space-between; align-items: center; padding-left: 44px; }
.site-head strong { font-size: 20px; font-weight: 400; color: #fff; }
.site-head nav { display: flex; }
.site-head nav button { width: 89px; height: 37px; font-size: 12px; }
.site-head nav button, .rest button { border: 1px solid #a89a8a; border-radius: 4px; background: linear-gradient(#fbfbfb, #f2f2f2 50%, #e8e8e8 60%, #fff); }
.meeting { height: 59px; flex: none; margin: 0 -1px; background: #999; border: 2px solid #1b2f7c; border-radius: 5px; display: flex; justify-content: space-between; align-items: center; padding: 0 30px 0 43px; }
.meeting h2 { font-size: 23px; color: #fff; }
.mock-body { flex: 1; min-height: 0; display: flex; margin-right: -1px; }
.stage { flex: 1; min-width: 0; border-left: 3px solid #0055e5; background: #ece9e2; padding: 22px 0 0 23px; }
.stage-panel { height: 100%; border: 1px solid #7f9db9; border-right: 0; background: #fff; display: flex; flex-direction: column; }
.videos { position: relative; flex: 1; min-height: 0; padding: 12px 31px 18px 10px; display: flex; flex-direction: column; gap: 20px; }
.video { background: #bbddff; border: 2px solid #666; border-radius: 15px; }
.video.big { flex: 235; border-radius: 30px; }
.row { flex: 119; display: grid; grid-template-columns: 167fr 171fr 157fr; gap: 35px; }
.add-user { position: absolute; right: 4px; top: 10px; }
.call-bar { height: 44px; flex: none; background: linear-gradient(#d0cdbc, #eae8d9 4px); display: flex; align-items: center; padding: 0 7px 0 14px; gap: 2px; }
.call-bar span { flex: 1; }
.check { appearance: none; width: 13px; height: 13px; border: 1px solid #8a7d70; background: #fff; position: relative; }
.check:checked::after { content: ""; position: absolute; left: 3px; top: 0; width: 4px; height: 8px; border: solid #21a121; border-width: 0 2px 2px 0; transform: rotate(40deg); }
.side { width: 355px; flex: none; display: flex; flex-direction: column; }
.team { height: 88px; flex: none; background: #fff; border: 1px solid #222; border-bottom: 0; padding: 3px 4px 0; }
.team h3 { font-size: 19px; line-height: 22px; }
.chat-tabs { height: 43px; flex: none; display: flex; background: #fff; border-left: 1px solid #222; }
.chat-tabs .cur { width: 81px; background: #f3f2ed; border-top: 3px solid #f0a030; border-right: 1px solid #8fa0a0; border-radius: 3px 3px 0 0; font-size: 12px; }
.rest { flex: 1; display: flex; padding: 5px 0 0 4px; border-bottom: 1px solid #6c7a80; }
.rest button { flex: 89; font-size: 12px; }
.rest .last { flex: 84; }
.rest .wide { flex: none; width: 96px; font-size: 14px; }
.chat { flex: 1; min-height: 0; background: #f3f2ed; border-left: 1px solid #7f9db9; border-right: 1px solid #8b9eab; }
.chat svg { width: 100%; height: 100%; overflow: visible; }
.chat text { font: 13px "Comic Sans MS", "Comic Neue", Lato, sans-serif; fill: #111; }
.write { height: 44px; flex: none; background: #fff; border: 1px solid #222; display: flex; justify-content: space-between; align-items: center; padding: 0 18px 0 14px; }
.write input { width: 278px; height: 31px; padding: 0 0 7px 14px; font: 12px "Liberation Sans", sans-serif; color: #222; background: linear-gradient(#0099cc, #0099cc) 0 100% / 100% 2px no-repeat, linear-gradient(#0099cc, #0099cc) 0 100% / 2px 7px no-repeat, linear-gradient(#0099cc, #0099cc) 100% 100% / 2px 7px no-repeat; }
.mock-foot { height: 34px; flex: none; background: #ece9e2; border-left: 3px solid #0055e5; border-right: 2px solid #003a9e; border-bottom: 3px solid #0040ae; display: flex; justify-content: flex-end; }
.mock-foot svg { margin-right: 2px; }
.hscroll { height: 5px; flex: none; background: #dcdcdc; }
.hscroll i { display: block; width: 86%; height: 100%; background: #bebebe; }
.pages { height: 42px; flex: none; border-top: 1px solid #f4f4f4; border-bottom: 1px solid #bbb; display: flex; align-items: center; padding: 0 14px 0 12px; background: #e5e5e5; }
.crumb { display: flex; align-items: center; gap: 6px; white-space: nowrap; }
.crumb.strong { font-weight: 700; color: #222; margin-right: 11px; }
.d { width: 11px; height: 13px; color: #666; }
.sep { width: 10px; height: 12px; margin: 0 8px 0 13px; color: #aaa; }
.page-list { flex: 1; height: 34px; border: 1px solid #bbb; background: #fff; box-shadow: inset 0 0 3px #ccc; padding: 4px; margin-right: 9px; }
.page-list button { height: 24px; padding: 0 6px; background: #3f7fb9; color: #fff; font-size: 14px; line-height: 24px; }
.act { display: flex; align-items: center; gap: 2px; margin-right: 10px; white-space: nowrap; color: #444; }
.act.up { margin: 0 0 0 1px; }
.f { width: 12px; height: 12px; } .c { width: 11px; height: 11px; }

.right { width: 252px; flex: none; background: #dae9f7; }
.right .tabs { padding: 5px 7px 0 5px; }
.right .tab { width: 207px; }
.right .pin { background: #d0d9e1; }
.props { padding: 12px 15px 0; display: flex; flex-direction: column; }
.props h2 { font-size: 15px; line-height: 26px; font-weight: 600; color: #222; margin-bottom: 18px; }
.props label { line-height: 18px; color: #666; }
.pick { position: relative; flex: none; }
.pick select { appearance: none; width: 100%; height: 23px; background: #fff; border-radius: 2px; padding-left: 5px; display: block; }
.pick svg { position: absolute; right: 8px; top: 50%; width: 12px; height: 12px; margin-top: -6px; color: #555; pointer-events: none; }
.cells .pick svg { right: -1px; color: #aaa; }
.props > .pick { margin: 2px 0 13px; }
.props > .pick, .props > .field { width: 222px; }
.field { height: 24px; border: 1px solid #c4c4c4; border-radius: 4px; background: #fff; padding: 0 3px; font-size: 12px; color: #111; margin-bottom: 13px; }
.sizes { display: flex; gap: 7px; margin: 0 0 13px; }
.num { width: 79px; height: 24px; background: #fff; border: 1px solid #c4c4c4; border-radius: 4px; display: flex; align-items: center; padding: 0 7px 0 3px; gap: 6px; }
.num label { color: #aaa; }
.num input { flex: 1; width: 0; text-align: right; font-size: 13px; color: #111; }
.num svg { width: 7px; height: 16px; color: #ccc; }
.dots { width: 45px; }
.bgrow { display: flex; justify-content: space-between; margin-top: 1px; width: 222px; }
.bgrow .pick { width: 186px; }
.palette { width: 29px; height: 23px; display: grid; place-items: center; background: #dfe9f2; color: #b0b8bf; }
.palette svg { width: 17px; height: 17px; }
.copy { display: flex; align-items: center; gap: 8px; padding: 8px 0 0 2px; }
.copy input { appearance: none; width: 15px; height: 15px; border: 2px solid #777; border-radius: 2px; flex: none; }
.copy label { color: #999; white-space: nowrap; font-size: 13px; }

.taskbar { position: relative; height: 40px; flex: none; display: flex; align-items: center; background: #52285a; color: #fff; }
.wall { position: absolute; inset: 0; width: 100%; height: 100%; }
.task { position: relative; width: 63px; height: 40px; display: grid; place-items: center; }
.task.start { width: 51px; }
.task.open { width: 60px; height: 38px; border: 1px solid #d6a8dc; background: rgba(255, 255, 255, .25); }
.task.cur { border-color: #fff; background: rgba(255, 255, 255, .5); }
.tray { position: relative; margin-left: auto; }
time { position: relative; width: 94px; padding-right: 2px; text-align: center; font-size: 12px; line-height: 17px; }
</style>
